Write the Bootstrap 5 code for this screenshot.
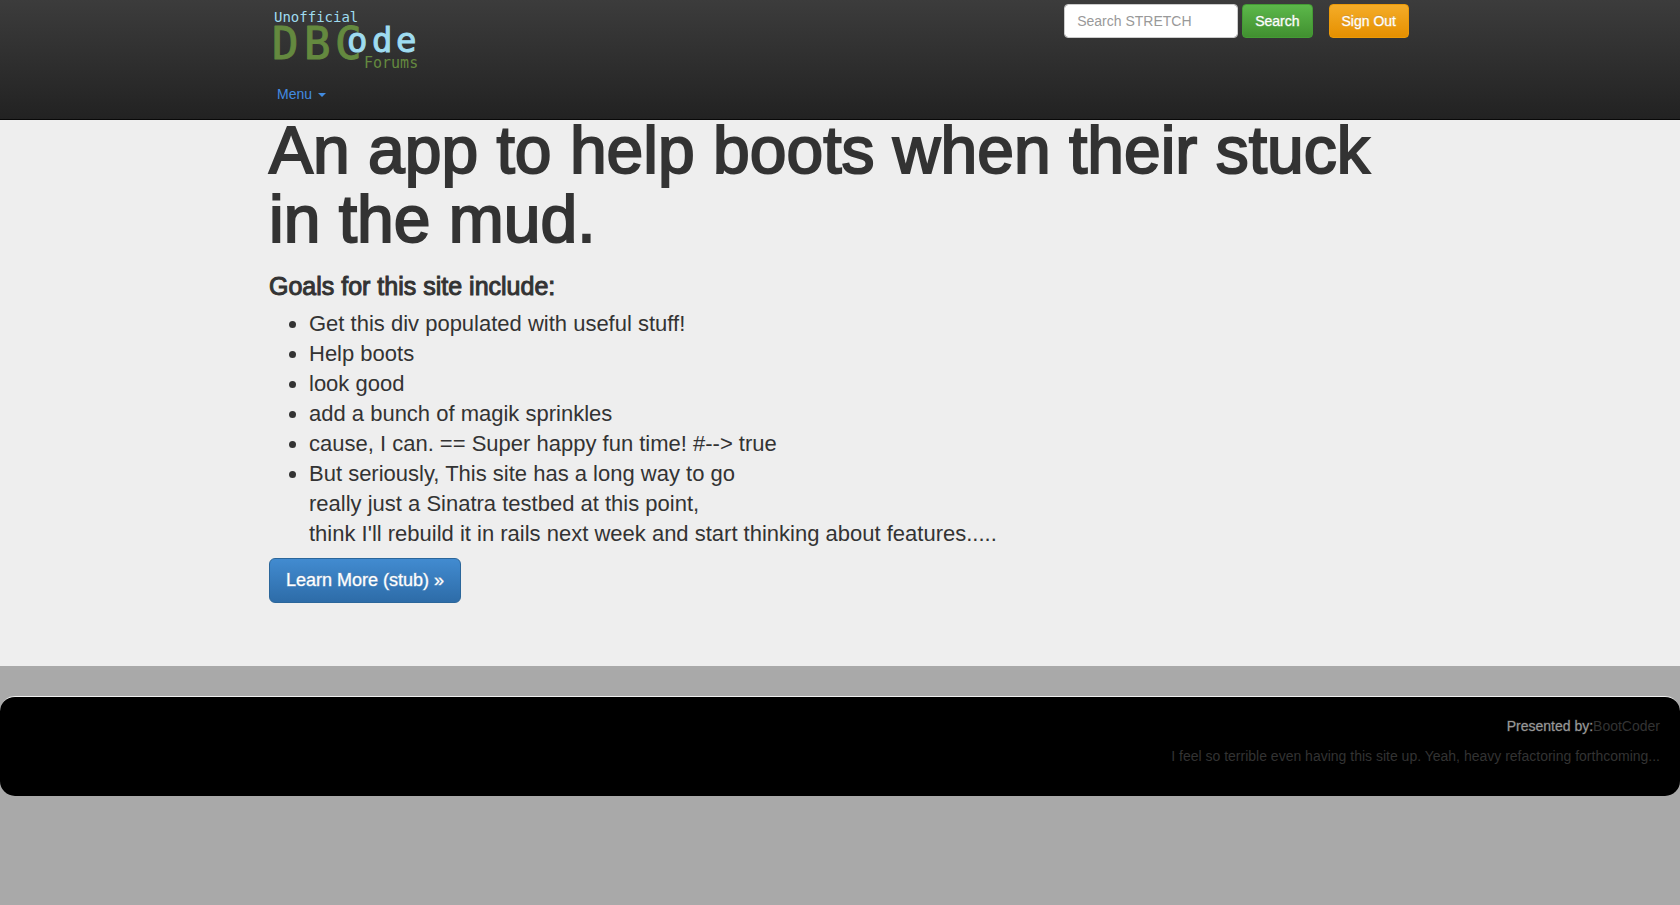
<!DOCTYPE html>
<html lang="en">
<head>
<meta charset="utf-8">
<meta name="viewport" content="width=device-width, initial-scale=1">
<title>DBCode Forums</title>
<link href="https://cdn.jsdelivr.net/npm/bootstrap@5.3.0/dist/css/bootstrap.min.css" rel="stylesheet">
<style>
body { font-family: "Liberation Sans", Arial, sans-serif; font-size: 14px; line-height: 20px; color: #333; background: #a9a9a9; padding-top: 116px; }
.site-wrap { max-width: 1170px; padding-left: 14px; padding-right: 16px; }
.site-nav { min-height: 120px; padding: 0; align-items: flex-start; background: linear-gradient(#3c3c3c, #222); border-bottom: 1px solid #080808; }
.site-nav .site-wrap { align-items: flex-start; }
.brand-art { display: block; width: 160px; height: 80px; }
.brand-art text { font-family: "DejaVu Sans Mono", monospace; }
.menu-link { color: #428be0; padding: 4px 8px; }
.menu-link.dropdown-toggle::after { border-width: 4px 4px 0; margin-left: 6px; vertical-align: middle; }
.tool-row { padding-top: 4px; }
.tool-row .form-control { width: 174px; height: 34px; font-size: 14px; padding: 6px 12px; border: 1px solid #ccc; border-radius: 4px; }
.tool-row .form-control::placeholder { color: #999; }
.btn { font-size: 14px; line-height: 20px; padding: 6px 12px; border-radius: 4px; color: #fff; text-shadow: 0 -1px 0 rgba(0,0,0,.2); -webkit-text-stroke: 1px rgba(255,255,255,.4); }
.btn:hover { color: #fff; }
.btn-find { background: linear-gradient(#5cb84a, #419030); border-color: #449b34; }
.btn-leave { background: linear-gradient(#f4ac28, #e69000); border-color: #ec9a08; }
.btn-more { font-size: 18px; line-height: 23px; padding: 10px 16px; border-radius: 6px; background: linear-gradient(#428bd0, #2d6ca8); border-color: #2b669a; }
.hero { background: #eee; padding-bottom: 63px; }
.hero h1 { font-size: 66px; line-height: 69px; font-weight: 400; margin: 0 0 19px; -webkit-text-stroke: 2px #333; }
.hero h3 { font-size: 25px; line-height: 26px; font-weight: 400; margin: 0 0 10px; -webkit-text-stroke: 1px #333; }
.hero ul { font-size: 22px; line-height: 30px; margin: 0 0 9px; padding-left: 40px; }
.site-foot { margin-top: 30px; min-height: 100px; padding: 19px 20px; background: #000; border-top: 1px solid #eee; border-radius: 15px; color: #333; }
.site-foot p { margin: 0 0 10px; }
.site-foot p:last-child { margin: 0; }
.site-foot span { color: #999; -webkit-text-stroke: 1px rgba(153,153,153,.3); }
.site-foot a { color: #333; text-decoration: none; }
</style>
</head>
<body>
<nav class="navbar fixed-top site-nav">
  <div class="container site-wrap d-flex justify-content-between">
    <div>
      <a href="#" aria-label="Unofficial DBCode Forums">
        <svg class="brand-art" viewBox="0 0 160 80">
          <text x="5" y="22" font-size="14" fill="#9fdcf0">Unofficial</text>
          <text x="3 35 66" y="59" font-size="44" fill="#64893f" stroke="#64893f" stroke-width="1" stroke-linejoin="round">DBC</text>
          <text x="78 103 127" y="52" font-size="34" fill="#9fdcf0" stroke="#9fdcf0" stroke-width="1">ode</text>
          <text x="95" y="68" font-size="15" fill="#64893f">Forums</text>
        </svg>
      </a>
      <div class="dropdown">
        <a class="menu-link dropdown-toggle d-inline-block text-decoration-none" href="#" data-bs-toggle="dropdown">Menu</a>
        <ul class="dropdown-menu"><li><a class="dropdown-item" href="#">Forums</a></li></ul>
      </div>
    </div>
    <div class="tool-row d-flex">
      <form class="d-flex gap-1 me-3" role="search">
        <input class="form-control" type="search" placeholder="Search STRETCH" aria-label="Search">
        <button class="btn btn-find" type="button">Search</button>
      </form>
      <button class="btn btn-leave" type="button">Sign Out</button>
    </div>
  </div>
</nav>
<main class="hero">
  <div class="container site-wrap">
    <h1>An app to help boots when their stuck in the mud.</h1>
    <h3>Goals for this site include:</h3>
    <ul>
      <li>Get this div populated with useful stuff!</li>
      <li>Help boots</li>
      <li>look good</li>
      <li>add a bunch of magik sprinkles</li>
      <li>cause, I can. == Super happy fun time! #--&gt; true</li>
      <li>But seriously, This site has a long way to go<br>really just a Sinatra testbed at this point,<br>think I'll rebuild it in rails next week and start thinking about features.....</li>
    </ul>
    <a class="btn btn-more" href="#">Learn More (stub) »</a>
  </div>
</main>
<footer class="site-foot text-end">
  <p><span>Presented by:</span><a href="#">BootCoder</a></p>
  <p>I feel so terrible even having this site up. Yeah, heavy refactoring forthcoming...</p>
</footer>
<script src="https://cdn.jsdelivr.net/npm/bootstrap@5.3.0/dist/js/bootstrap.bundle.min.js"></script>
</body>
</html>
